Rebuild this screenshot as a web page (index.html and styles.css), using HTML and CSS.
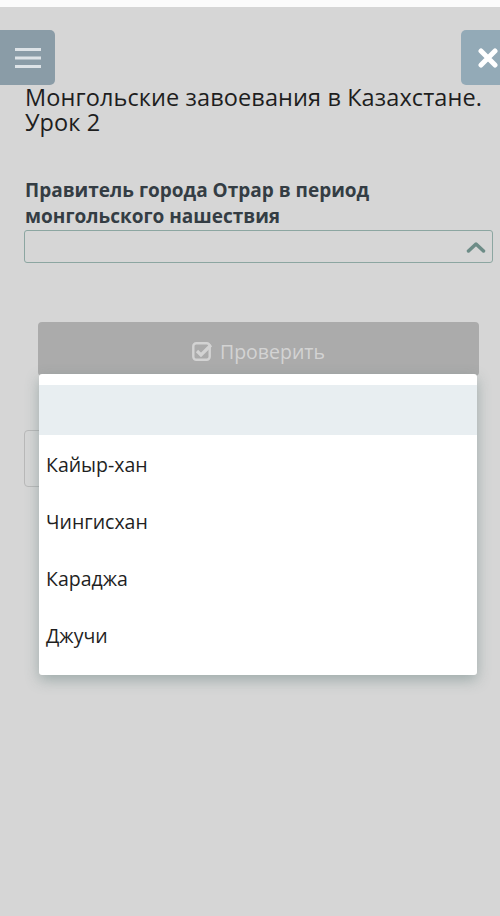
FILE: index.html
```html
<!DOCTYPE html>
<html lang="ru">
<head>
  <meta charset="UTF-8">
  <meta name="viewport" content="width=device-width, initial-scale=1.0">
  <title>Монгольские завоевания в Казахстане. Урок 2</title>
  <link rel="stylesheet" href="styles.css">
</head>
<body>
  <div class="status-strip"></div>

  <!-- Шапка -->
  <header class="top-bar">
    <button class="menu-btn" aria-label="Меню">
      <svg width="26" height="21" viewBox="0 0 26 21">
        <rect x="0" y="1" width="26" height="3" fill="#dde3e7"/>
        <rect x="0" y="9.5" width="26" height="3" fill="#dde3e7"/>
        <rect x="0" y="18" width="26" height="3" fill="#dde3e7"/>
      </svg>
    </button>
    <button class="close-btn" aria-label="Закрыть">
      <svg width="20" height="20" viewBox="0 0 20 20">
        <path d="M3 3 L17 17 M17 3 L3 17" stroke="#fff" stroke-width="5" stroke-linecap="round"/>
      </svg>
    </button>
  </header>

  <h1 class="lesson-title">Монгольские завоевания в Казахстане. Урок 2</h1>

  <main class="quiz">
    <label class="question">Правитель города Отрар в период монгольского нашествия</label>
    <div class="select-box">
      <svg width="20" height="12" viewBox="0 0 20 12">
        <path d="M2.5 10 L10 3 L17.5 10" fill="none" stroke="#6d8c87" stroke-width="3.5" stroke-linecap="round" stroke-linejoin="round"/>
      </svg>
    </div>

    <button class="check-btn">
      <svg width="21" height="20" viewBox="0 0 21 20">
        <rect x="1.3" y="2.3" width="16.4" height="16.4" rx="3" fill="none" stroke="#d3d3d3" stroke-width="2.4"/>
        <path d="M5 10 L9 14 L19 4" fill="none" stroke="#d3d3d3" stroke-width="3.2"/>
      </svg>
      Проверить
    </button>

    <div class="next-box"></div>

    <!-- Открытый список вариантов -->
    <ul class="options">
      <li class="selected"></li>
      <li>Кайыр-хан</li>
      <li>Чингисхан</li>
      <li>Караджа</li>
      <li>Джучи</li>
    </ul>
  </main>
</body>
</html>
```

FILE: styles.css
```css
body {
  font-family: 'Open Sans', 'Noto Sans', sans-serif;
  margin: 0;
  padding: 0;
  background: #d6d6d6;
  color: #222;
  min-height: 916px;
  overflow-x: hidden;
}

.status-strip {
  height: 7px;
  background: #fbfbfb;
}

.top-bar {
  display: flex;
  justify-content: space-between;
  margin-top: 23px;
  height: 55px;
}

.menu-btn,
.close-btn {
  border: none;
  padding: 0;
  width: 56px;
  height: 55px;
  border-radius: 5px;
  display: flex;
  align-items: center;
}

.menu-btn {
  background: #8a9ca7;
  margin-left: -1px;
  border-radius: 0 5px 5px 0;
  justify-content: center;
  padding-left: 2px;
}

.close-btn {
  background: #93aab7;
  margin-right: -17px;
  padding-left: 17px;
}

.lesson-title {
  margin: 0;
  padding: 0 5px 0 25px;
  font-size: 23.5px;
  line-height: 25px;
  letter-spacing: 0.1px;
  font-weight: 400;
  color: #1e1e1e;
}

.quiz {
  position: relative;
  padding: 42px 7px 0 24px;
}

.question {
  display: block;
  padding-left: 1px;
  font-size: 19px;
  line-height: 26px;
  font-weight: 700;
  color: #343d44;
}

.select-box {
  height: 31px;
  margin-top: 1px;
  border: 1.5px solid #8ca6a1;
  border-radius: 3px;
  display: flex;
  justify-content: flex-end;
  align-items: center;
  padding-right: 6px;
}

.check-btn {
  display: flex;
  justify-content: center;
  align-items: center;
  gap: 7px;
  width: 441px;
  height: 54px;
  margin: 59px 0 0 14px;
  border: none;
  border-radius: 4px;
  background: #ababab;
  color: #d3d3d3;
  font-family: inherit;
  font-size: 19.5px;
  padding: 4px 0 0;
}

.next-box {
  width: 440px;
  height: 55px;
  margin-top: 54px;
  border: 1px solid #b9b9b9;
  border-radius: 4px;
}

.options {
  position: absolute;
  top: 239px;
  left: 39px;
  width: 438px;
  margin: 0;
  padding: 11px 0 12px;
  list-style: none;
  background: #fff;
  border-radius: 3px;
  box-shadow: 0 5px 14px rgba(90, 120, 118, 0.45);
}

.options li {
  height: 57px;
  line-height: 59px;
  padding-left: 7px;
  font-size: 19.5px;
  color: #1f1f1f;
}

.options li.selected {
  height: 50px;
  background: #e8eef1;
}
```
